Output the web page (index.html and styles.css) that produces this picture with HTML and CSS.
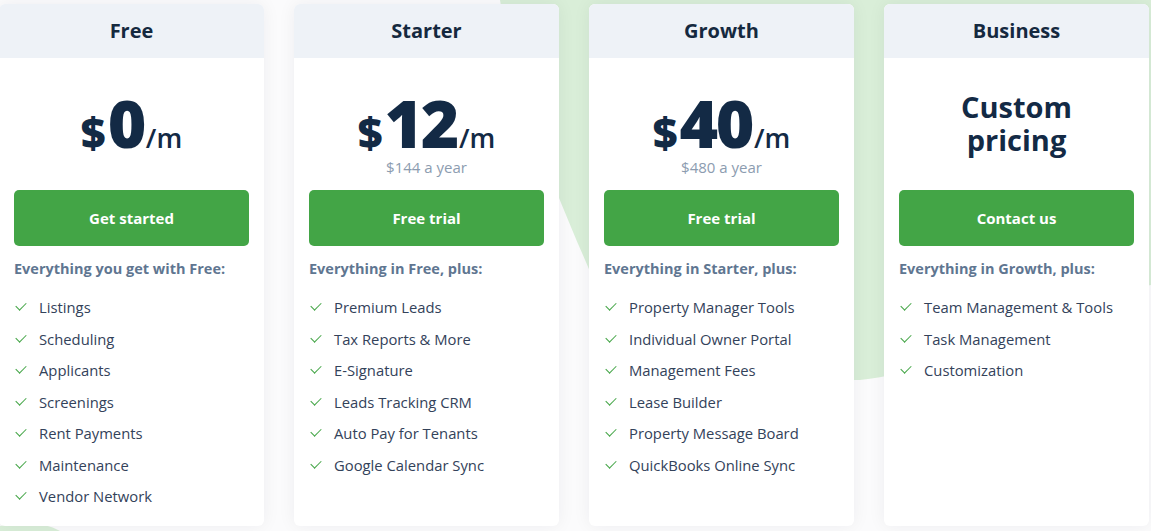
FILE: index.html
```html
<!DOCTYPE html>
<html lang="en">
<head>
<meta charset="utf-8">
<title>Pricing</title>
<link rel="stylesheet" href="styles.css">
</head>
<body>
<div class="page">
  <svg class="blob" width="1151" height="531" viewBox="0 0 1151 531" aria-hidden="true">
    <path d="M500 0 C 518 110, 560 200, 602 300 C 620 350, 640 380, 700 381 L 860 380 C 960 370, 1060 300, 1151 285 L 1151 0 Z" fill="#d9eed8"/>
    <path d="M0 526 C 20 522, 45 522, 60 531 L 0 531 Z" fill="#d9eed8"/>
  </svg>
  <div class="plans">
    <section class="card">
      <header class="card-head">Free</header>
      <div class="card-body">
        <div class="price">
          <div class="amount"><span class="cur">$</span><span class="num">0</span><span class="per">/m</span></div>
        </div>
        <a class="btn">Get started</a>
        <p class="lead">Everything you get with Free:</p>
        <ul class="features">
          <li>Listings</li>
          <li>Scheduling</li>
          <li>Applicants</li>
          <li>Screenings</li>
          <li>Rent Payments</li>
          <li>Maintenance</li>
          <li>Vendor Network</li>
        </ul>
      </div>
    </section>
    <section class="card">
      <header class="card-head">Starter</header>
      <div class="card-body">
        <div class="price">
          <div class="amount"><span class="cur">$</span><span class="num">12</span><span class="per">/m</span></div>
          <div class="year">$144 a year</div>
        </div>
        <a class="btn">Free trial</a>
        <p class="lead">Everything in Free, plus:</p>
        <ul class="features">
          <li>Premium Leads</li>
          <li>Tax Reports &amp; More</li>
          <li>E-Signature</li>
          <li>Leads Tracking CRM</li>
          <li>Auto Pay for Tenants</li>
          <li>Google Calendar Sync</li>
        </ul>
      </div>
    </section>
    <section class="card">
      <header class="card-head">Growth</header>
      <div class="card-body">
        <div class="price">
          <div class="amount"><span class="cur">$</span><span class="num">40</span><span class="per">/m</span></div>
          <div class="year">$480 a year</div>
        </div>
        <a class="btn">Free trial</a>
        <p class="lead">Everything in Starter, plus:</p>
        <ul class="features">
          <li>Property Manager Tools</li>
          <li>Individual Owner Portal</li>
          <li>Management Fees</li>
          <li>Lease Builder</li>
          <li>Property Message Board</li>
          <li>QuickBooks Online Sync</li>
        </ul>
      </div>
    </section>
    <section class="card">
      <header class="card-head">Business</header>
      <div class="card-body">
        <div class="price">
          <div class="custom"><div>Custom</div><div>pricing</div></div>
        </div>
        <a class="btn">Contact us</a>
        <p class="lead">Everything in Growth, plus:</p>
        <ul class="features">
          <li>Team Management &amp; Tools</li>
          <li>Task Management</li>
          <li>Customization</li>
        </ul>
      </div>
    </section>
  </div>
</div>
</body>
</html>
```

FILE: styles.css
```css
* { box-sizing: border-box; }
html, body { margin: 0; padding: 0; }
body {
  font-family: "Open Sans", "Liberation Sans", sans-serif;
  background: #fbfbfc;
  color: #2f3d52;
}
.page {
  position: relative;
  width: 1151px;
  height: 531px;
  overflow: hidden;
  background: #fbfbfc;
}
.blob {
  position: absolute;
  left: 0;
  top: 0;
}
.plans {
  position: relative;
  display: flex;
  gap: 30px;
  padding-top: 4px;
  margin-left: -1px;
}
.card {
  flex: 0 0 265px;
  height: 522px;
  background: #fff;
  border-radius: 6px;
  overflow: hidden;
  box-shadow: 0 0 18px rgba(20, 30, 50, 0.06);
}
.card-head {
  height: 54px;
  background: #eef2f7;
  display: flex;
  align-items: center;
  justify-content: center;
  font-size: 20px;
  font-weight: 700;
  color: #15293f;
  padding-bottom: 1px;
}
.card-body {
  padding: 0 15px;
}
.price {
  height: 132px;
  display: flex;
  flex-direction: column;
  align-items: center;
  padding-top: 36px;
}
.amount {
  display: flex;
  align-items: baseline;
  color: #132a45;
  font-weight: 800;
  line-height: 56px;
  height: 56px;
}
.cur {
  font-size: 43px;
  margin-right: 2px;
}
.num {
  font-size: 66px;
  letter-spacing: -2.5px;
}
.per {
  font-size: 27px;
  font-weight: 600;
  margin-left: 2px;
}
.year {
  font-size: 15px;
  color: #8c9cb0;
  line-height: 18px;
  margin-top: 8px;
}
.custom {
  font-size: 29px;
  font-weight: 700;
  line-height: 33px;
  text-align: center;
  color: #132a45;
  margin-top: -4px;
}
.btn {
  display: flex;
  align-items: center;
  justify-content: center;
  height: 56px;
  border-radius: 5px;
  background: #43a546;
  color: #fff;
  font-size: 15px;
  font-weight: 700;
  padding-bottom: 1px;
}
.lead {
  margin: 14px 0 0;
  font-size: 14.5px;
  font-weight: 700;
  color: #5f7691;
  line-height: 18px;
}
.features {
  list-style: none;
  margin: 19px 0 0;
  padding: 0;
}
.features li {
  position: relative;
  height: 31.5px;
  line-height: 20px;
  padding-left: 25px;
  font-size: 14.8px;
  color: #33425a;
}
.features li::before {
  content: "";
  position: absolute;
  left: 2px;
  top: 5px;
  width: 9px;
  height: 5px;
  border-left: 1.6px solid #43a546;
  border-bottom: 1.6px solid #43a546;
  transform: rotate(-45deg);
}
```
